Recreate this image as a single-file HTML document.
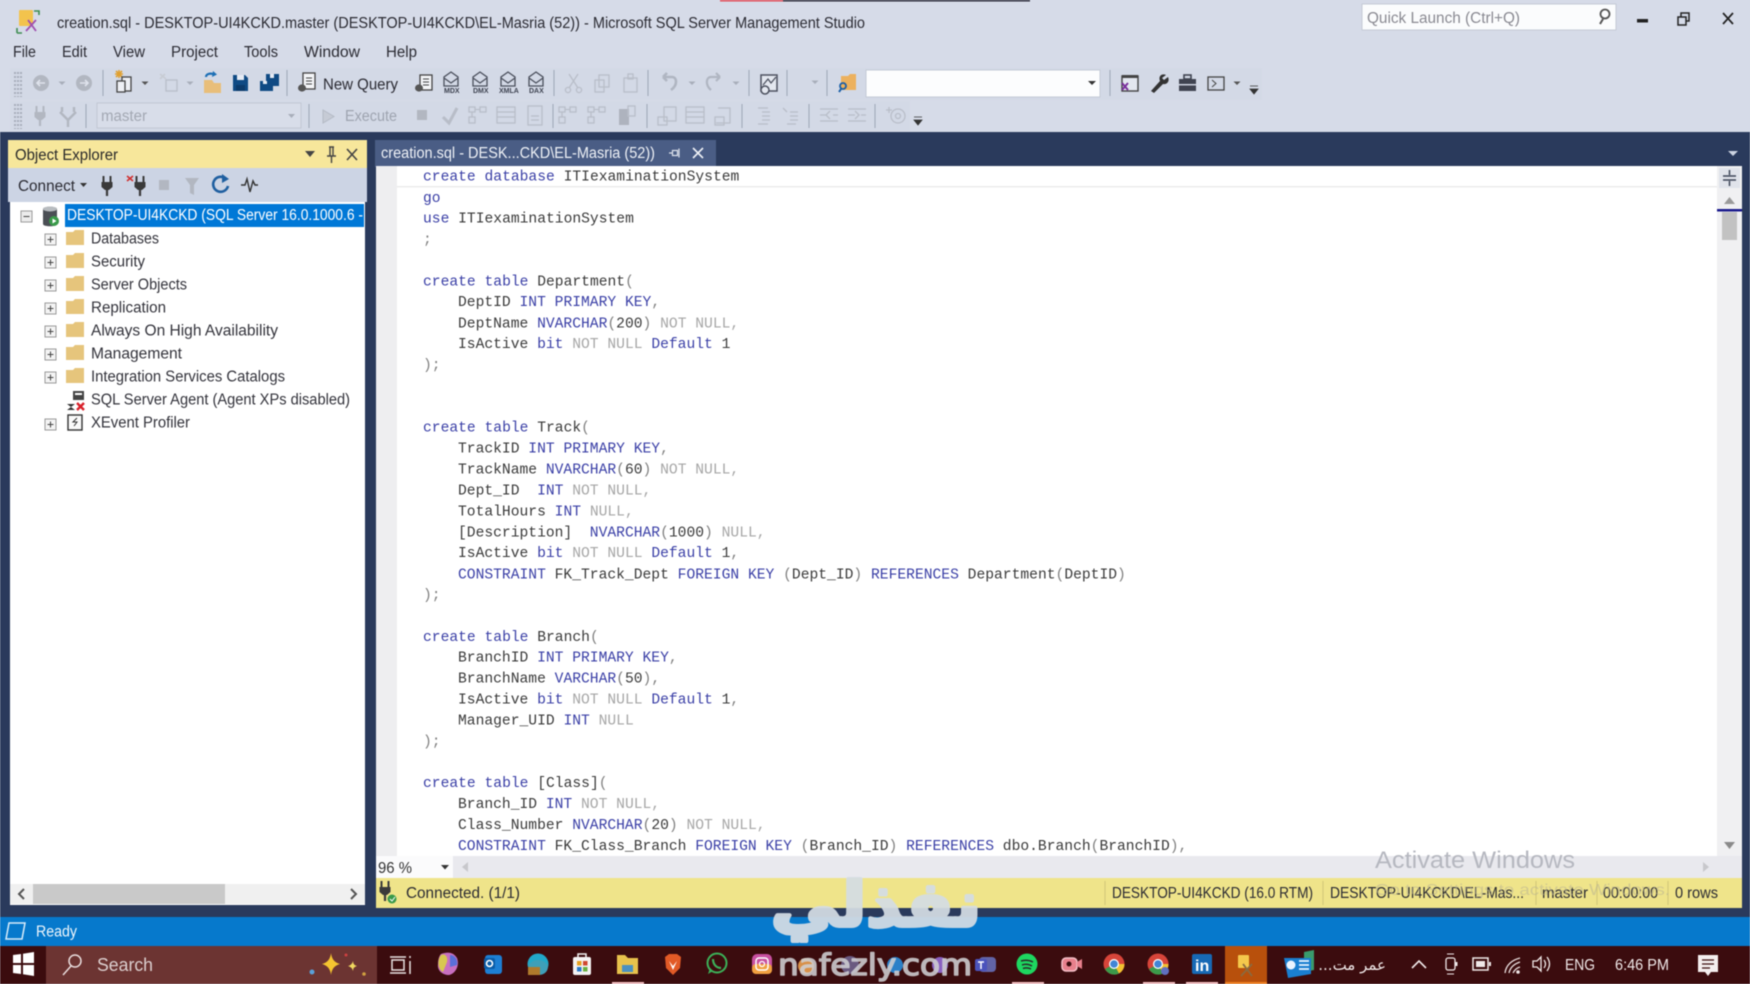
<!DOCTYPE html>
<html><head><meta charset="utf-8"><title>SSMS</title>
<style>
html,body{margin:0;padding:0;width:1750px;height:984px;overflow:hidden;background:#d6dbe8}
svg{display:block;filter:blur(.6px)}
text{font-family:"Liberation Sans",sans-serif;white-space:pre}
.c text{font-family:"Liberation Mono",monospace;font-size:14.65px;fill:#3a3a3a}
.k{fill:#3a3fa6}.g{fill:#a6a6a6}.p{fill:#808080}
.ui{font-size:15.5px;fill:#2b2b33}
.tr{font-size:15.5px;fill:#33333b}
.dis{fill:none;stroke:#b9bec9;stroke-width:1.3}
.sep{stroke:#9da5b5;stroke-width:1}
</style></head><body>
<svg width="1750" height="984" viewBox="0 0 1750 984" xmlns="http://www.w3.org/2000/svg">
<defs>
<g id="cube"><path d="M-7 -1 V-4 L0 -9 L7 -4 V-1 V5 H-7 Z M-7 -3 L0 2 L7 -3" fill="none" stroke="#4a4f5c" stroke-width="1.3"/></g>
<g id="folder"><path d="M0 2 H7 L9 0 H18 V15 H0 Z" fill="#e6c57c"/></g>
<g id="plus"><rect x="-5.5" y="-5.5" width="11" height="11" fill="#f4f4f4" stroke="#9a9a9a"/><path d="M-3 0H3M0 -3V3" stroke="#444" stroke-width="1"/></g>
<g id="drop"><path d="M-3.5 -1.5H3.5L0 2Z" fill="#555"/></g>
<g id="dropd"><path d="M-3.5 -1.5H3.5L0 2Z" fill="#a8aeba"/></g>
<g id="ovf"><path d="M-4 -4H4M-4 -1H4L0 4Z" fill="#333" stroke="#333" stroke-width=".8"/></g>
<g id="grip"><path d="M-3 0V25M0 0V25M3 0V25" stroke="#a9afbc" stroke-width="2" stroke-dasharray="2 2"/></g>
<g id="flow"><rect x="-8" y="-8" width="6" height="5" class="dis"/><rect x="3" y="-8" width="6" height="5" class="dis"/><path d="M-2 -5.5H3M-5 -3V2" class="dis"/><rect x="-8" y="2" width="6" height="6" class="dis"/></g>
<g id="grid"><rect x="-9" y="-8" width="18" height="16" class="dis"/><path d="M-9 -3H9M-9 2H9" class="dis"/></g>
<g id="plugd"><path d="M-3.5 -10V-4M3.500 -10V-4" stroke="currentColor" stroke-width="2"/><path d="M-5.500 -4H5.500V1L2 4H-2L-5.500 1Z" fill="currentColor"/><path d="M0 4V10" stroke="currentColor" stroke-width="2.200"/></g>
</defs>

<!-- chrome background -->
<rect width="1750" height="984" fill="#d6dbe8"/>
<rect x="720" y="0" width="63" height="1.5" fill="#e24a55"/><rect x="783" y="0" width="247" height="1.5" fill="#2a2a38"/>

<!-- logo -->
<rect x="19" y="10" width="14" height="16" rx="1" fill="#f3c34d"/>
<path d="M17 33V28M17 33H22M34 11H39V15" stroke="#3d8c50" stroke-width="1.6" fill="none"/>
<path d="M26 31L36 20M28 20L36 31" stroke="#a050b0" stroke-width="1.8"/>
<text x="57" y="28" class="ui" textLength="808" lengthAdjust="spacingAndGlyphs" style="font-size:16px">creation.sql - DESKTOP-UI4KCKD.master (DESKTOP-UI4KCKD\EL-Masria (52)) - Microsoft SQL Server Management Studio</text>

<!-- quick launch -->
<rect x="1362" y="4" width="254" height="26" fill="#fbfcfd" stroke="#c4cad6"/>
<text x="1367" y="23" style="font-size:15.5px;fill:#8a8a92" textLength="153" lengthAdjust="spacingAndGlyphs">Quick Launch (Ctrl+Q)</text>
<circle cx="1605" cy="14" r="4.5" fill="none" stroke="#555" stroke-width="1.8"/><path d="M1603 19L1600 24" stroke="#555" stroke-width="2"/>
<rect x="1637" y="19" width="11" height="3.5" fill="#222"/>
<rect x="1681" y="13" width="8" height="8" fill="none" stroke="#222" stroke-width="1.5"/><rect x="1678" y="17" width="8" height="8" fill="#d6dbe8" stroke="#222" stroke-width="1.5"/>
<path d="M1723 13L1733 24M1733 13L1723 24" stroke="#222" stroke-width="1.7"/>

<!-- menu -->
<g class="ui">
<text x="13" y="57" class="ui" textLength="23" lengthAdjust="spacingAndGlyphs">File</text>
<text x="62" y="57" class="ui" textLength="25" lengthAdjust="spacingAndGlyphs">Edit</text>
<text x="113" y="57" class="ui" textLength="32" lengthAdjust="spacingAndGlyphs">View</text>
<text x="171" y="57" class="ui" textLength="47" lengthAdjust="spacingAndGlyphs">Project</text>
<text x="244" y="57" class="ui" textLength="34" lengthAdjust="spacingAndGlyphs">Tools</text>
<text x="304" y="57" class="ui" textLength="56" lengthAdjust="spacingAndGlyphs">Window</text>
<text x="386" y="57" class="ui" textLength="31" lengthAdjust="spacingAndGlyphs">Help</text>
</g>

<!-- toolbar 1 -->
<rect x="10" y="68" width="1252" height="32" fill="#d3d9e6"/>
<use href="#grip" x="18" y="72"/>
<circle cx="41" cy="83" r="8" fill="#b2b7c1"/><path d="M45 83H37M40 80L37 83L40 86" stroke="#dfe3ec" stroke-width="1.6" fill="none"/>
<use href="#dropd" x="62" y="83"/>
<circle cx="84" cy="83" r="8" fill="#b2b7c1"/><path d="M80 83H88M85 80L88 83L85 86" stroke="#dfe3ec" stroke-width="1.6" fill="none"/>
<line x1="103" y1="70" x2="103" y2="96" class="sep"/>
<path d="M116 71l6 6m0-6l-6 6M119 70v8M115 74h8" stroke="#e0a030" stroke-width="1.6"/>
<rect x="122" y="77" width="9" height="14" fill="#eef0f5" stroke="#444" stroke-width="1.3"/><rect x="117" y="81" width="8" height="11" fill="#eef0f5" stroke="#444" stroke-width="1.3"/>
<use href="#drop" x="145" y="83"/>
<rect x="166" y="80" width="11" height="11" class="dis"/><path d="M160 74l6 5M160 79l5-5" stroke="#c8ccd4" stroke-width="1.600"/>
<use href="#dropd" x="190" y="83"/>
<path d="M204 80H212L214 83H221V93H204Z" fill="#e8be7a"/><path d="M206 77C206 74 210 73 213 74" fill="none" stroke="#1c6fb5" stroke-width="2.2"/><path d="M213 71L217 74.5L212 77Z" fill="#1c6fb5"/>
<path d="M233 75H245L248 78V91H233Z" fill="#0f4a84"/><rect x="237" y="75" width="7" height="5" fill="#e6ebf4"/><rect x="236" y="85" width="9" height="6" fill="#0b3a6a"/>
<path d="M266 74H279V86H273V91H260V81H266Z" fill="#0f4a84"/><rect x="270" y="74" width="4" height="4" fill="#e6ebf4"/><rect x="263" y="81" width="4" height="3" fill="#e6ebf4"/>
<line x1="287" y1="70" x2="287" y2="96" class="sep"/>
<rect x="303" y="73" width="12" height="16" fill="#f4f5f8" stroke="#444" stroke-width="1.3"/><path d="M306 78H312M306 81H312M306 84H312" stroke="#444"/><ellipse cx="302" cy="88" rx="4" ry="3.6" fill="#555"/>
<text x="323" y="89.500" class="ui" textLength="75" lengthAdjust="spacingAndGlyphs" style="font-size:15.5px">New Query</text>
<rect x="420" y="75" width="12" height="15" fill="#f4f5f8" stroke="#444" stroke-width="1.3"/><path d="M423 79H429M423 82H429M423 85H429" stroke="#444"/><ellipse cx="419" cy="88" rx="4" ry="3.6" fill="#555"/>
<use href="#cube" x="451" y="81"/><text x="444" y="93" style="font-size:7px;font-weight:bold;fill:#3d4250">MDX</text>
<use href="#cube" x="480" y="81"/><text x="473" y="93" style="font-size:7px;font-weight:bold;fill:#3d4250">DMX</text>
<use href="#cube" x="508" y="81"/><text x="499" y="93" style="font-size:7px;font-weight:bold;fill:#3d4250">XMLA</text>
<use href="#cube" x="536" y="81"/><text x="529" y="93" style="font-size:7px;font-weight:bold;fill:#3d4250">DAX</text>
<line x1="554" y1="70" x2="554" y2="96" class="sep"/>
<path d="M569 74L578 88M578 74L569 88" class="dis"/><circle cx="568" cy="90" r="2.6" class="dis"/><circle cx="579" cy="90" r="2.6" class="dis"/>
<rect x="599" y="75" width="10" height="12" class="dis"/><rect x="595" y="80" width="9" height="12" class="dis" fill="#d3d9e6"/>
<rect x="624" y="78" width="13" height="14" class="dis"/><rect x="628" y="74" width="5" height="5" class="dis"/>
<line x1="648" y1="70" x2="648" y2="96" class="sep"/>
<path d="M663 77H672C677 77 678 85 671 90M663 77L667 73M663 77L667 81" fill="none" stroke="#b0b6c2" stroke-width="2.6"/>
<use href="#dropd" x="692" y="83"/>
<path d="M720 77H711C706 77 705 85 711 90M720 77L716 73M720 77L716 81" fill="none" stroke="#b0b6c2" stroke-width="2.2"/>
<use href="#dropd" x="736" y="83"/>
<line x1="749" y1="70" x2="749" y2="96" class="sep"/>
<rect x="761" y="75" width="16" height="16" fill="#e3e7ef" stroke="#4d5260" stroke-width="1.5"/><path d="M763 85L768 79L771 83L776 77" fill="none" stroke="#4d5260" stroke-width="1.3"/><circle cx="765" cy="90" r="4" fill="#e3e7ef" stroke="#4d5260" stroke-width="1.5"/>
<line x1="787" y1="70" x2="787" y2="96" class="sep"/>
<use href="#dropd" x="815" y="82"/>
<line x1="827" y1="70" x2="827" y2="96" class="sep"/>
<path d="M841 76H848L850 74H856V90H841Z" fill="#ecb15e"/><circle cx="843" cy="86" r="3" fill="none" stroke="#1a5fa8" stroke-width="1.8"/><path d="M841 89L839 92" stroke="#1a5fa8" stroke-width="2"/>
<rect x="866" y="70" width="234" height="27" fill="#fcfdfe" stroke="#c4cad6"/>
<path d="M1088 81H1096L1092 85Z" fill="#333"/>
<line x1="1110" y1="70" x2="1110" y2="96" class="sep"/>
<rect x="1122" y="76" width="16" height="15" fill="#e3e7ef" stroke="#444" stroke-width="1.4"/><rect x="1122" y="75" width="16" height="3" fill="#444"/><path d="M1122 83L1128 90M1128 83L1122 90" stroke="#7a2f9c" stroke-width="2"/>
<path d="M1166 75C1162 73 1158 76 1160 81L1151 91L1154 93L1163 84C1167 85 1170 81 1168 77L1164 80L1162 78Z" fill="#333"/>
<rect x="1179" y="79" width="17" height="12" fill="#3f4350"/><rect x="1184" y="75" width="7" height="4" fill="none" stroke="#3f4350" stroke-width="1.6"/><rect x="1179" y="84" width="17" height="1.4" fill="#d6dbe8"/>
<rect x="1208" y="77" width="16" height="13" fill="none" stroke="#444" stroke-width="1.3"/><path d="M1212 80L1216 83.5L1212 87" fill="none" stroke="#444"/>
<use href="#drop" x="1237" y="83"/>
<use href="#ovf" x="1254" y="90"/>

<!-- toolbar 2 -->
<rect x="10" y="101" width="900" height="30" fill="#d3d9e6"/>
<use href="#grip" x="18" y="104"/>
<g style="color:#b2b7c1"><use href="#plugd" x="40" y="116"/></g>
<path d="M62 107V112M74 107V112M60 112L68 120V127M76 112L68 120" fill="none" stroke="#b2b7c1" stroke-width="2.4"/>
<line x1="86" y1="104" x2="86" y2="128" class="sep"/>
<rect x="97" y="103" width="204" height="25" fill="#d8dde9" stroke="#c2c8d4"/>
<text x="101" y="121" style="font-size:15.5px;fill:#a3a8b3" textLength="46" lengthAdjust="spacingAndGlyphs">master</text>
<path d="M288 114H295L291.500 118Z" fill="#a8aeba"/>
<line x1="309" y1="104" x2="309" y2="128" class="sep"/>
<path d="M323 110L334 116.500L323 123Z" fill="#c6cbd5" stroke="#b4bac5"/>
<text x="345" y="121" style="font-size:15.500px;fill:#9ea4b0" textLength="52" lengthAdjust="spacingAndGlyphs">Execute</text>
<rect x="417" y="110" width="10" height="10" fill="#b2b7c1"/>
<path d="M443 117L449 123L457 108" fill="none" stroke="#b8bdc8" stroke-width="3"/>
<use href="#flow" x="477" y="115"/><use href="#grid" x="506" y="115"/>
<rect x="528" y="106" width="14" height="19" class="dis"/><path d="M531 116H539M531 120H539" class="dis"/>
<line x1="553" y1="104" x2="553" y2="128" class="sep"/>
<use href="#flow" x="567" y="115"/><use href="#flow" x="596" y="115"/>
<rect x="619" y="109" width="10" height="16" fill="#aeb3be"/><rect x="628" y="106" width="7" height="10" class="dis"/>
<line x1="647" y1="104" x2="647" y2="128" class="sep"/>
<rect x="664" y="107" width="12" height="14" class="dis"/><rect x="658" y="117" width="9" height="8" class="dis"/>
<use href="#grid" x="695" y="115"/>
<path d="M718 108H730V123H716" class="dis"/><rect x="715" y="117" width="9" height="8" class="dis"/>
<line x1="742" y1="104" x2="742" y2="128" class="sep"/>
<path d="M758 108H768M762 112H770M762 116H770M762 120H770M758 124H768" class="dis"/>
<path d="M783 108L787 112M790 112H798M790 116H798M790 120H798M787 124H796" class="dis"/>
<line x1="809" y1="104" x2="809" y2="128" class="sep"/>
<path d="M820 109H838M820 121H838M820 115H827M833 115H838M830 111L826 115L830 119" class="dis"/>
<path d="M848 109H866M848 121H866M848 115H855M861 115H866M855 111L859 115L855 119" class="dis"/>
<line x1="875" y1="104" x2="875" y2="128" class="sep"/>
<circle cx="898" cy="116" r="7" class="dis"/><circle cx="898" cy="116" r="2.500" class="dis"/><path d="M889 107V113M886 110H892" class="dis"/>
<use href="#ovf" x="918" y="121"/>

<!-- dark body -->
<rect x="0" y="132" width="1750" height="785" fill="#2a3a5c"/>

<!-- Object Explorer -->
<rect x="8" y="140" width="359" height="28" fill="#f7e79b"/>
<text x="15" y="160" style="font-size:15.500px;fill:#2a2a2a" textLength="103" lengthAdjust="spacingAndGlyphs">Object Explorer</text>
<path d="M305 151H315L310 157Z" fill="#444"/>
<path d="M329 147H334M330 147V156H333V147M327 156H336M331.500 156V163" fill="none" stroke="#444" stroke-width="1.4"/>
<path d="M347 149L357 160M357 149L347 160" stroke="#444" stroke-width="1.600"/>
<rect x="8" y="168" width="359" height="34" fill="#ccd4e4"/>
<text x="18" y="191" class="ui" textLength="57" lengthAdjust="spacingAndGlyphs">Connect</text>
<path d="M80 183H87L83.500 187Z" fill="#333"/>
<g style="color:#3a3a3a"><use href="#plugd" x="107" y="186"/><use href="#plugd" x="140" y="186"/></g>
<path d="M127 176L133 181M133 176L127 181" stroke="#d03030" stroke-width="1.600"/>
<rect x="159" y="180" width="10" height="10" fill="#b2b7c1"/>
<path d="M185 178H199L194 185V195L190 193V185Z" fill="#b2b7c1"/>
<path d="M226 179A7.500 7.500 0 1 0 228 186" fill="none" stroke="#1f5fa0" stroke-width="2.600"/><path d="M222 174L229 179L222 183Z" fill="#1f5fa0"/>
<path d="M241 185H245L247 179L250 192L253 181L255 185H258" fill="none" stroke="#333" stroke-width="1.400"/>

<rect x="10" y="202" width="355" height="703" fill="#fff"/>
<rect x="65" y="204" width="299" height="23" fill="#0078d7"/>
<text x="67" y="220" style="font-size:15.500px;fill:#fff" textLength="296" lengthAdjust="spacingAndGlyphs">DESKTOP-UI4KCKD (SQL Server 16.0.1000.6 -</text>
<rect x="21" y="211" width="11" height="11" fill="#ececec" stroke="#9a9a9a"/><path d="M23.500 216.500H29.500" stroke="#444"/>
<path d="M43 209C43 206 57 206 57 209V224C57 227 43 227 43 224Z" fill="#4b4f55"/><ellipse cx="50" cy="209" rx="7" ry="2.500" fill="#b8bcc0"/><circle cx="54" cy="221" r="5" fill="#3a9a4a"/><path d="M52.500 218.500L56.500 221L52.500 223.500Z" fill="#fff"/>

<use href="#plus" x="50.500" y="239.500"/><use href="#folder" x="66" y="230"/><text x="91" y="243.500" class="tr" textLength="68" lengthAdjust="spacingAndGlyphs">Databases</text>
<use href="#plus" x="50.500" y="262.500"/><use href="#folder" x="66" y="253"/><text x="91" y="266.500" class="tr" textLength="54" lengthAdjust="spacingAndGlyphs">Security</text>
<use href="#plus" x="50.500" y="285.500"/><use href="#folder" x="66" y="276"/><text x="91" y="289.500" class="tr" textLength="96" lengthAdjust="spacingAndGlyphs">Server Objects</text>
<use href="#plus" x="50.500" y="308.500"/><use href="#folder" x="66" y="299"/><text x="91" y="312.500" class="tr" textLength="75" lengthAdjust="spacingAndGlyphs">Replication</text>
<use href="#plus" x="50.500" y="331.500"/><use href="#folder" x="66" y="322"/><text x="91" y="335.500" class="tr" textLength="187" lengthAdjust="spacingAndGlyphs">Always On High Availability</text>
<use href="#plus" x="50.500" y="354.500"/><use href="#folder" x="66" y="345"/><text x="91" y="358.500" class="tr" textLength="91" lengthAdjust="spacingAndGlyphs">Management</text>
<use href="#plus" x="50.500" y="377.500"/><use href="#folder" x="66" y="368"/><text x="91" y="381.500" class="tr" textLength="194" lengthAdjust="spacingAndGlyphs">Integration Services Catalogs</text>
<rect x="73" y="391" width="11" height="9" fill="#444"/><rect x="75" y="393" width="7" height="2" fill="#fff"/><path d="M67 404H75L67 410H75Z" fill="#333"/><path d="M77 403L84 410M84 403L77 410" stroke="#d8202a" stroke-width="2.400"/>
<text x="91" y="404.500" class="tr" textLength="259" lengthAdjust="spacingAndGlyphs">SQL Server Agent (Agent XPs disabled)</text>
<use href="#plus" x="50.500" y="424.500"/><rect x="68" y="415" width="14" height="15" fill="#fafafa" stroke="#333" stroke-width="1.400"/><path d="M77 418L73 422H77L74 426" fill="none" stroke="#333"/>
<text x="91" y="427.500" class="tr" textLength="99" lengthAdjust="spacingAndGlyphs">XEvent Profiler</text>

<rect x="10" y="884" width="355" height="20" fill="#f0f0f0"/>
<rect x="33" y="884" width="192" height="20" fill="#c9c9c9"/>
<path d="M24 889L19 894L24 899" fill="none" stroke="#555" stroke-width="2"/>
<path d="M351 889L356 894L351 899" fill="none" stroke="#555" stroke-width="2"/>

<!-- doc tab -->
<rect x="375" y="140" width="341" height="27" fill="#4a5d85"/>
<text x="381" y="158" style="font-size:15.500px;fill:#eef1f6" textLength="274" lengthAdjust="spacingAndGlyphs">creation.sql - DESK...CKD\EL-Masria (52))</text>
<path d="M669 153H672M672.500 150.500H677.500V155.500H672.500ZM679 148.500V157.500" fill="none" stroke="#dde2ec" stroke-width="1.200"/>
<path d="M693 148L703 158M703 148L693 158" stroke="#eef1f6" stroke-width="1.600"/>
<path d="M1728 151H1738L1733 156Z" fill="#cdd4e2"/>

<!-- editor -->
<rect x="376" y="166" width="1366" height="690" fill="#fff"/>
<rect x="376" y="166" width="21" height="690" fill="#eeeef0"/>
<rect x="397" y="186" width="1320" height="1.500" fill="#ececec"/>
<rect x="1717" y="166" width="25" height="690" fill="#f0f0f2"/>
<rect x="1719" y="168" width="21" height="20" fill="#e0e3ea"/><path d="M1723 176H1736M1723 180H1736M1729.500 170V175M1729.500 181V186" stroke="#3d4658" stroke-width="1.500"/>
<path d="M1724 204H1735L1729.500 197Z" fill="#9a9a9a"/>
<rect x="1717" y="209" width="25" height="2.500" fill="#1a1a8c"/>
<rect x="1722" y="212" width="15" height="28" fill="#c2c2c2"/>
<path d="M1724 842H1735L1729.500 849Z" fill="#8a8a8a"/>

<g class="c">
<text x="423" y="180.300"><tspan class="k">create database</tspan> ITIexaminationSystem</text>
<text x="423" y="202"><tspan class="k">go</tspan></text>
<text x="423" y="222.500"><tspan class="k">use</tspan> ITIexaminationSystem</text>
<text x="423" y="243.700"><tspan class="p">;</tspan></text>
<text x="423" y="285.500"><tspan class="k">create table</tspan> Department<tspan class="p">(</tspan></text>
<text x="458" y="306">DeptID <tspan class="k">INT PRIMARY KEY</tspan><tspan class="p">,</tspan></text>
<text x="458" y="327.300">DeptName <tspan class="k">NVARCHAR</tspan><tspan class="p">(</tspan>200<tspan class="p">)</tspan> <tspan class="g">NOT NULL,</tspan></text>
<text x="458" y="348.200">IsActive <tspan class="k">bit</tspan> <tspan class="g">NOT NULL</tspan> <tspan class="k">Default</tspan> 1</text>
<text x="423" y="369.100"><tspan class="p">);</tspan></text>
<text x="423" y="431.300"><tspan class="k">create table</tspan> Track<tspan class="p">(</tspan></text>
<text x="458" y="452.700">TrackID <tspan class="k">INT PRIMARY KEY</tspan><tspan class="p">,</tspan></text>
<text x="458" y="473.600">TrackName <tspan class="k">NVARCHAR</tspan><tspan class="p">(</tspan>60<tspan class="p">)</tspan> <tspan class="g">NOT NULL,</tspan></text>
<text x="458" y="494.500">Dept_ID  <tspan class="k">INT</tspan> <tspan class="g">NOT NULL,</tspan></text>
<text x="458" y="515.400">TotalHours <tspan class="k">INT</tspan> <tspan class="g">NULL,</tspan></text>
<text x="458" y="536.300">[Description]  <tspan class="k">NVARCHAR</tspan><tspan class="p">(</tspan>1000<tspan class="p">)</tspan> <tspan class="g">NULL,</tspan></text>
<text x="458" y="557.200">IsActive <tspan class="k">bit</tspan> <tspan class="g">NOT NULL</tspan> <tspan class="k">Default</tspan> 1<tspan class="p">,</tspan></text>
<text x="458" y="578.400"><tspan class="k">CONSTRAINT</tspan> FK_Track_Dept <tspan class="k">FOREIGN KEY</tspan> <tspan class="p">(</tspan>Dept_ID<tspan class="p">)</tspan> <tspan class="k">REFERENCES</tspan> Department<tspan class="p">(</tspan>DeptID<tspan class="p">)</tspan></text>
<text x="423" y="599"><tspan class="p">);</tspan></text>
<text x="423" y="640.800"><tspan class="k">create table</tspan> Branch<tspan class="p">(</tspan></text>
<text x="458" y="661.700">BranchID <tspan class="k">INT PRIMARY KEY</tspan><tspan class="p">,</tspan></text>
<text x="458" y="682.600">BranchName <tspan class="k">VARCHAR</tspan><tspan class="p">(</tspan>50<tspan class="p">),</tspan></text>
<text x="458" y="703.500">IsActive <tspan class="k">bit</tspan> <tspan class="g">NOT NULL</tspan> <tspan class="k">Default</tspan> 1<tspan class="p">,</tspan></text>
<text x="458" y="724.400">Manager_UID <tspan class="k">INT</tspan> <tspan class="g">NULL</tspan></text>
<text x="423" y="745.300"><tspan class="p">);</tspan></text>
<text x="423" y="787.100"><tspan class="k">create table</tspan> [Class]<tspan class="p">(</tspan></text>
<text x="458" y="808">Branch_ID <tspan class="k">INT</tspan> <tspan class="g">NOT NULL,</tspan></text>
<text x="458" y="828.900">Class_Number <tspan class="k">NVARCHAR</tspan><tspan class="p">(</tspan>20<tspan class="p">)</tspan> <tspan class="g">NOT NULL,</tspan></text>
<text x="458" y="849.800"><tspan class="k">CONSTRAINT</tspan> FK_Class_Branch <tspan class="k">FOREIGN KEY</tspan> <tspan class="p">(</tspan>Branch_ID<tspan class="p">)</tspan> <tspan class="k">REFERENCES</tspan> dbo.Branch<tspan class="p">(</tspan>BranchID<tspan class="p">),</tspan></text>
</g>

<!-- zoom row -->
<rect x="376" y="856" width="1366" height="22" fill="#e9e9ee"/>
<rect x="376" y="856" width="77" height="22" fill="#fbfbfc"/>
<text x="378" y="873" style="font-size:15.500px;fill:#333" textLength="34" lengthAdjust="spacingAndGlyphs">96 %</text>
<path d="M441 865H449L445 869.500Z" fill="#333"/>
<path d="M468 862L462 867L468 872Z" fill="#c8c8cc"/>
<path d="M1703 862L1709 867L1703 872Z" fill="#c8c8cc"/>

<!-- status yellow -->
<rect x="376" y="878" width="1366" height="30" fill="#efe48a"/>
<g style="color:#3a3a3a"><use href="#plugd" x="385" y="891"/></g><circle cx="392" cy="899" r="4.500" fill="#3a9a4a"/><path d="M390 899L392 901L395 897" stroke="#fff" fill="none"/>
<text x="406" y="898" class="ui" textLength="114" lengthAdjust="spacingAndGlyphs">Connected. (1/1)</text>
<line x1="1105" y1="881" x2="1105" y2="905" stroke="#d0c678"/>
<text x="1112" y="898" class="ui" textLength="201" lengthAdjust="spacingAndGlyphs">DESKTOP-UI4KCKD (16.0 RTM)</text>
<line x1="1323" y1="881" x2="1323" y2="905" stroke="#d0c678"/>
<text x="1330" y="898" class="ui" textLength="194" lengthAdjust="spacingAndGlyphs">DESKTOP-UI4KCKD\EL-Mas...</text>
<line x1="1536" y1="881" x2="1536" y2="905" stroke="#d0c678"/>
<text x="1542" y="898" class="ui" textLength="46" lengthAdjust="spacingAndGlyphs">master</text>
<line x1="1597" y1="881" x2="1597" y2="905" stroke="#d0c678"/>
<text x="1603" y="898" class="ui" textLength="55" lengthAdjust="spacingAndGlyphs">00:00:00</text>
<line x1="1668" y1="881" x2="1668" y2="905" stroke="#d0c678"/>
<text x="1675" y="898" class="ui" textLength="43" lengthAdjust="spacingAndGlyphs">0 rows</text>

<!-- activate -->
<text x="1375" y="868" style="font-size:24px;fill:#b6b8c0" textLength="200" lengthAdjust="spacingAndGlyphs">Activate Windows</text>
<text x="1375" y="895" style="font-size:16px;fill:#b9b392;opacity:.55" textLength="295" lengthAdjust="spacingAndGlyphs">Go to Settings to activate Windows.</text>

<!-- blue statusbar -->
<rect x="0" y="917" width="1750" height="29" fill="#0679cc"/>
<path d="M9 923H25L22 939H6Z" fill="none" stroke="#d8ecfa" stroke-width="1.500"/>
<text x="36" y="936.500" style="font-size:15.500px;fill:#eef6fc" textLength="41" lengthAdjust="spacingAndGlyphs">Ready</text>

<!-- taskbar -->
<rect x="0" y="946" width="1750" height="38" fill="#3b0c0e"/>
<rect x="46" y="946" width="331" height="38" fill="#6c3432"/>
<path d="M13 955L21 954V963H13ZM23 953.700L34 952V963H23ZM13 965H21V974L13 973ZM23 965H34V976L23 974.300Z" fill="#fff"/>
<circle cx="75" cy="961" r="6" fill="none" stroke="#e8dcdc" stroke-width="1.500"/><path d="M71 966L63 975" stroke="#e8dcdc" stroke-width="1.500"/>
<text x="97" y="971" style="font-size:18px;fill:#dccfcf" textLength="56" lengthAdjust="spacingAndGlyphs">Search</text>
<path d="M331 953Q332 962 340 964Q332 966 331 975Q330 966 322 964Q330 962 331 953Z" fill="#f4c430"/>
<path d="M353 961Q353 965 357 966Q353 967 353 971Q352 967 348 966Q352 965 353 961Z" fill="#f0d860"/>
<circle cx="312" cy="972" r="2.500" fill="#5aa0d8"/><circle cx="346" cy="955" r="1.500" fill="#d04040"/><circle cx="364" cy="974" r="1.800" fill="#d0a040"/>

<!-- task view -->
<path d="M391 957H407M391 973H407M393 960H405V970H393ZM411 956V958M411 961V974" fill="none" stroke="#e8e2e2" stroke-width="1.500" transform="translate(-1 0)"/>
<!-- copilot -->
<path d="M441 954C449 951 454 953 457 958C460 966 455 974 449 975C443 975 437 971 438 964C438 960 439 956 441 954Z" fill="#c86fc0"/><path d="M441 955C446 953 448 958 447 962L443 972C439 970 436 962 441 955Z" fill="#d8c850"/><path d="M450 955C455 955 458 960 457 965L450 967Z" fill="#5a6fd8"/>
<!-- outlook -->
<g transform="translate(2 0)"><rect x="483" y="955" width="17" height="19" rx="3" fill="#1d7fd4"/><rect x="482" y="958" width="11" height="11" rx="2" fill="#0a5ca8"/><circle cx="487.500" cy="963.500" r="3" fill="none" stroke="#fff" stroke-width="1.600"/></g>
<!-- edge -->
<circle cx="538" cy="964" r="10.500" fill="#22a8c8"/><path d="M528 966C532 958 544 958 548 966C548 972 544 975 538 975C532 975 528 972 528 966Z" fill="#3f9fb8"/><rect x="528" y="967" width="12" height="8" fill="#b07a2c"/>
<!-- store -->
<rect x="573" y="957" width="18" height="18" rx="2" fill="#f4f2f2"/><path d="M578 957V954H586V957" fill="none" stroke="#f4f2f2" stroke-width="1.500"/><rect x="577" y="961" width="4.500" height="4.500" fill="#e8a020"/><rect x="583" y="961" width="4.500" height="4.500" fill="#d04830"/><rect x="577" y="967" width="4.500" height="4.500" fill="#2a78c8"/><rect x="583" y="967" width="4.500" height="4.500" fill="#6ab040"/>
<!-- explorer -->
<path d="M617 955H625L628 958H638V974H617Z" fill="#e8c24c"/><rect x="622" y="965" width="11" height="7" fill="#4a90c0"/><rect x="612" y="982" width="32" height="2" fill="#f4bfc0"/>
<!-- brave -->
<path d="M665 957L669 954H677L681 957L680 968L673 975L666 968Z" fill="#e25a26"/><path d="M669 961L673 966L677 961L673 970Z" fill="#fff"/>
<!-- whatsapp -->
<circle cx="717" cy="963" r="9.500" fill="none" stroke="#3cb058" stroke-width="2"/><path d="M708 974L710 968L713 971Z" fill="#3cb058"/><path d="M713 959C713 965 717 968 721 968" fill="none" stroke="#3cb058" stroke-width="2.200"/>
<!-- instagram -->
<rect x="752" y="954" width="20" height="20" rx="5" fill="#c850a0"/><rect x="752" y="964" width="20" height="10" rx="4" fill="#f0a040"/><rect x="756" y="958" width="12" height="12" rx="3" fill="none" stroke="#fff" stroke-width="1.500"/><circle cx="762" cy="964" r="2.500" fill="none" stroke="#fff" stroke-width="1.300"/>
<!-- hidden-ish icons beneath watermark -->
<circle cx="806" cy="966" r="8" fill="#d89048"/><circle cx="850" cy="965" r="9" fill="#6a5a80"/><circle cx="895" cy="965" r="8" fill="#2a80c8"/><circle cx="940" cy="965" r="8" fill="#8a60c0"/>
<!-- teams -->
<rect x="979" y="957" width="17" height="15" rx="4" fill="#6264a7"/><rect x="975" y="959" width="12" height="12" rx="2" fill="#4b53bc"/><path d="M978 962H984M981 962V969" stroke="#fff" stroke-width="1.500"/>
<!-- spotify -->
<circle cx="1027" cy="964" r="10.500" fill="#1ed760"/><path d="M1021 961Q1027 959 1033 962M1022 965Q1027 963 1032 966M1023 968.500Q1027 967 1031 969" fill="none" stroke="#2a2a2a" stroke-width="1.500"/><rect x="1012" y="982" width="32" height="2" fill="#f4bfc0"/>
<!-- camera -->
<rect x="1062" y="958" width="15" height="13" rx="4" fill="#e8808c" stroke="#f4c0c8" stroke-width="1.500"/><path d="M1077 962L1082 959V969L1077 966Z" fill="#e8808c"/><circle cx="1069" cy="964" r="2.500" fill="#3b0c0e"/>
<!-- chrome -->
<circle cx="1114" cy="964" r="10.500" fill="#d8453a"/><path d="M1114 964L1105 969A10.500 10.500 0 0 0 1119 973.500Z" fill="#3c9a4a"/><path d="M1114 964L1124.500 964A10.500 10.500 0 0 1 1119 973.500Z" fill="#f2c230"/><circle cx="1114" cy="964" r="5" fill="#fff"/><circle cx="1114" cy="964" r="3.800" fill="#4285d4"/>
<circle cx="1158" cy="964" r="10.500" fill="#d8453a"/><path d="M1158 964L1149 969A10.500 10.500 0 0 0 1163 973.500Z" fill="#3c9a4a"/><path d="M1158 964L1168.500 964A10.500 10.500 0 0 1 1163 973.500Z" fill="#f2c230"/><circle cx="1158" cy="964" r="5" fill="#fff"/><circle cx="1158" cy="964" r="3.800" fill="#4285d4"/><circle cx="1165" cy="971" r="4" fill="#6070c0"/><rect x="1143" y="982" width="32" height="2" fill="#f4bfc0"/>
<!-- linkedin -->
<rect x="1192" y="954" width="20" height="20" rx="2" fill="#1769b5"/><text x="1195" y="971" style="font-size:16px;font-weight:bold;fill:#fff">in</text><rect x="1186" y="982" width="32" height="2" fill="#f4bfc0"/>
<!-- ssms active -->
<rect x="1225" y="946" width="42" height="38" fill="#b8500c"/><rect x="1225" y="982" width="42" height="2" fill="#f08020"/>
<rect x="1238" y="955" width="11" height="13" rx="1" fill="#f4c84c"/><path d="M1241 976L1252 964M1243 964L1252 976" stroke="#8a6a40" stroke-width="1.800"/>
<!-- new outlook -->
<g transform="translate(-2 0)"><path d="M1306 952L1316 950V970L1306 972Z" fill="#3a9a6c"/><path d="M1286 958H1313V974L1290 978Z" fill="#1a7fd0"/><circle cx="1293" cy="965" r="4.500" fill="#eaf4ff"/><path d="M1301 961H1311M1301 965H1311M1301 969H1311" stroke="#eaf4ff" stroke-width="1.800"/></g>
<!-- arabic label -->
<text x="1386" y="970" direction="rtl" style="direction:rtl;font-size:15px;font-family:'DejaVu Sans',sans-serif;fill:#f0e8e8">عمر مت...</text>

<!-- tray -->
<path d="M1412 968L1419 961L1426 968" fill="none" stroke="#f0e8e8" stroke-width="1.600"/>
<rect x="1446" y="958" width="9" height="12" rx="2" fill="none" stroke="#f0e8e8" stroke-width="1.300"/><path d="M1447 954H1454M1447 974H1454" stroke="#f0e8e8"/><rect x="1455" y="962" width="2.500" height="4" fill="#f0e8e8"/>
<rect x="1473" y="958" width="15" height="12" fill="none" stroke="#f0e8e8" stroke-width="1.500"/><rect x="1476" y="961" width="9" height="6" fill="#f0e8e8"/><rect x="1489" y="962" width="2" height="4" fill="#f0e8e8"/>
<path d="M1505 973C1506 965 1512 960 1520 958M1509 973C1510 968 1514 964 1520 962M1513 973C1514 971 1516 968 1520 967" fill="none" stroke="#e8dcdc" stroke-width="1.300"/><circle cx="1518" cy="972" r="1.800" fill="#f0e8e8"/>
<path d="M1533 961H1537L1541 957V971L1537 967H1533Z" fill="none" stroke="#f0e8e8" stroke-width="1.300"/><path d="M1544 960Q1547 964 1544 968M1547 957Q1552 964 1547 971" fill="none" stroke="#f0e8e8" stroke-width="1.300"/>
<text x="1565" y="970" style="font-size:15.500px;fill:#f0e8e8" textLength="30" lengthAdjust="spacingAndGlyphs">ENG</text>
<text x="1615" y="970" style="font-size:15.500px;fill:#f0e8e8" textLength="54" lengthAdjust="spacingAndGlyphs">6:46 PM</text>
<path d="M1698 955H1718V972H1711L1708 976L1705 972H1698Z" fill="#f4eeee"/><path d="M1702 960H1714M1702 964H1714M1702 968H1710" stroke="#3b0c0e" stroke-width="1.200"/>

<!-- watermark -->
<text x="771" y="926" style="font-family:'DejaVu Sans',sans-serif;font-size:62px;font-weight:bold;fill:#d5dde4;stroke:#d5dde4;stroke-width:4;stroke-linejoin:round;opacity:.93" textLength="210" lengthAdjust="spacingAndGlyphs">نفذلي</text>
<text x="778" y="975" style="font-family:'DejaVu Sans',sans-serif;font-size:29px;fill:#cfcfd2;stroke:#cfcfd2;stroke-width:1.500;stroke-linejoin:round;opacity:.88" textLength="194" lengthAdjust="spacingAndGlyphs">nafezly.com</text>
</svg>
</body></html>
